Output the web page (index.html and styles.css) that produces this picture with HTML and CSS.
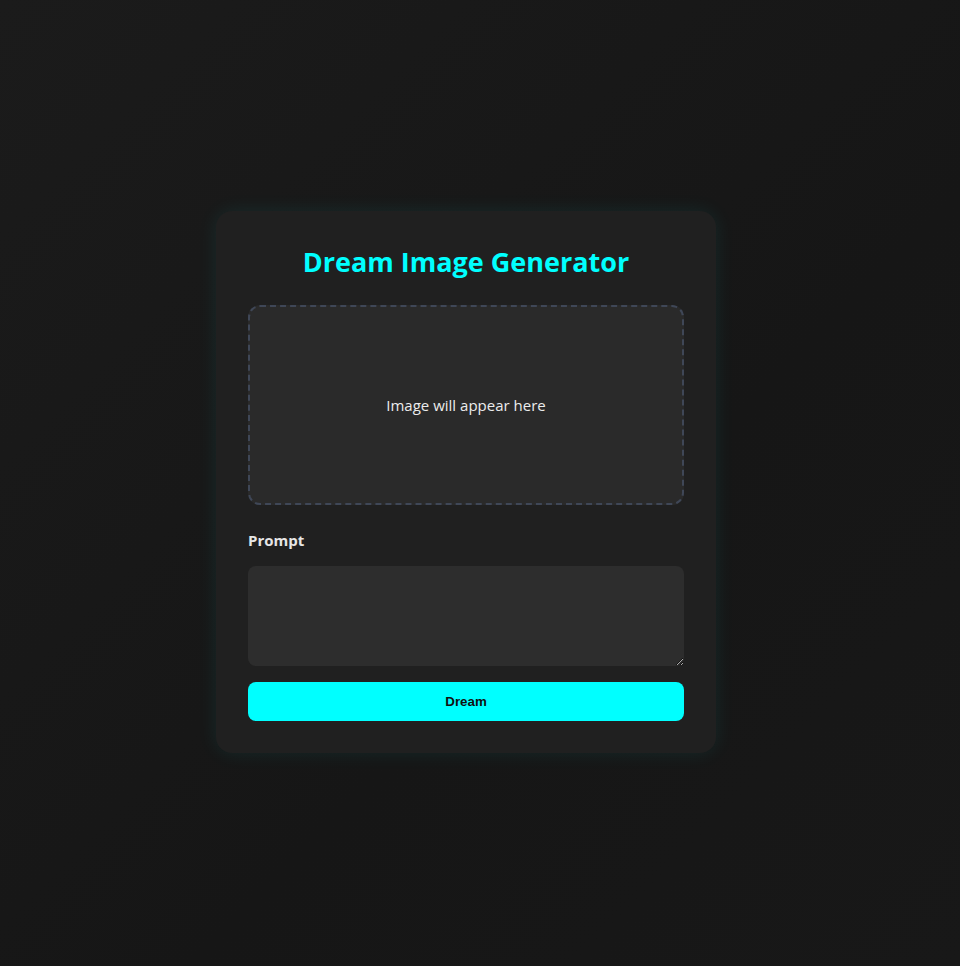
FILE: index.html
```html
<!DOCTYPE html>
<html lang="en">
<head>
<meta charset="utf-8">
<title>Dream Image Generator</title>
<link rel="stylesheet" href="styles.css">
</head>
<body>
  <main class="card">
    <h1 class="title">Dream Image Generator</h1>
    <div class="preview">Image will appear here</div>
    <label class="label" for="prompt">Prompt</label>
    <textarea id="prompt" class="prompt"></textarea>
    <button class="btn" type="button">Dream</button>
  </main>
</body>
</html>
```
FILE: styles.css
```css
* { box-sizing: border-box; }
html, body { height: 100%; }
body {
  margin: 0;
  padding: 0 28px 2px 0;
  min-height: 100vh;
  display: flex;
  align-items: center;
  justify-content: center;
  background: linear-gradient(135deg, #1b1b1b 0%, #161616 60%, #181818 100%);
  font-family: "Open Sans", "Noto Sans", sans-serif;
  color: #e6e6e6;
}
.card {
  width: 500px;
  padding: 32px;
  background: #202020;
  border-radius: 16px;
  box-shadow: 0 0 20px rgba(0, 255, 255, 0.08);
  display: flex;
  flex-direction: column;
}
.title {
  margin: 0 0 24px;
  height: 38px;
  line-height: 38px;
  text-align: center;
  color: #00ffff;
  font-size: 27px;
  font-weight: 700;
}
.preview {
  height: 200px;
  border: 2px dashed #3f4757;
  border-radius: 12px;
  background: #2a2a2a;
  display: flex;
  align-items: center;
  justify-content: center;
  font-size: 15px;
  color: #ececec;
  margin-bottom: 24px;
}
.label {
  display: block;
  font-weight: 700;
  font-size: 15px;
  line-height: 22px;
  color: #e6e6e6;
  margin-bottom: 15px;
}
.prompt {
  display: block;
  width: 100%;
  height: 100px;
  border: none;
  border-radius: 8px;
  background: #2d2d2d;
  color: #e6e6e6;
  padding: 10px;
  font-family: inherit;
  font-size: 14px;
  margin: 0 0 16px;
}
.btn {
  height: 39px;
  border: none;
  border-radius: 8px;
  background: #00ffff;
  color: #111;
  font-family: "Liberation Sans", Arial, sans-serif;
  font-size: 13.333px;
  font-weight: 700;
  cursor: pointer;
}
```
